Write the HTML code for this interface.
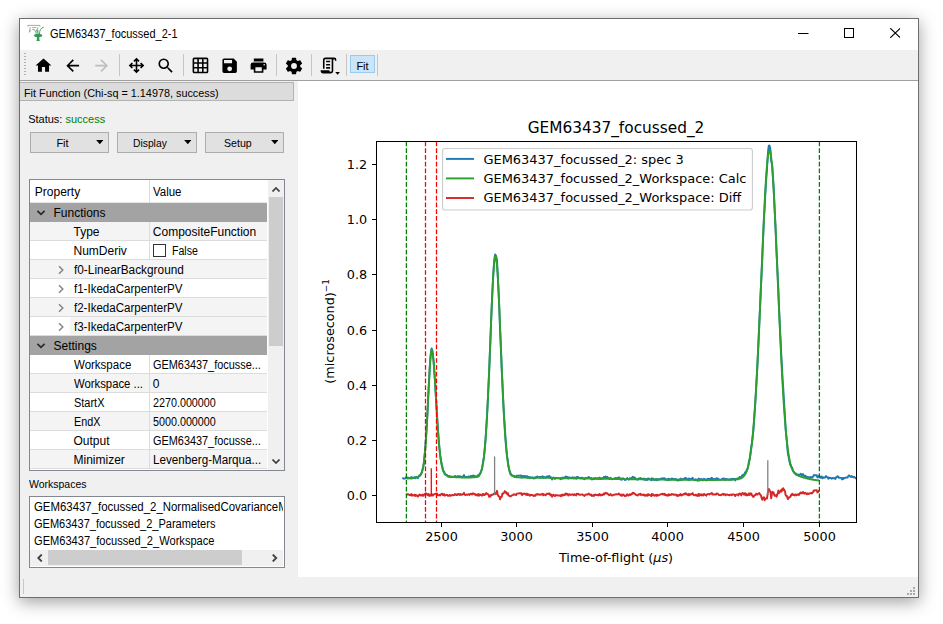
<!DOCTYPE html>
<html><head><meta charset="utf-8"><title>GEM63437_focussed_2-1</title>
<style>
html,body{margin:0;padding:0;background:#fff;}
body{width:943px;height:624px;position:relative;overflow:hidden;font-family:"Liberation Sans",sans-serif;font-size:11px;color:#000;}
div,span,svg{position:absolute;box-sizing:border-box;}
.win{left:19px;top:18px;width:900px;height:580px;background:#f0f0f0;border:1px solid #6e6e6e;box-shadow:0 4px 16px rgba(0,0,0,.38);}
.title{left:20px;top:19px;width:898px;height:31px;background:#fff;}
.title .tx{left:29.8px;top:7.5px;font-size:12px;line-height:14px;white-space:nowrap;letter-spacing:0px;}
.tool{left:20px;top:50px;width:898px;height:30px;background:#f0f0f0;}
.toolline{left:20px;top:80px;width:898px;height:1px;background:#a0a0a0;}
.ic{overflow:visible;}
.tsep{top:54px;width:1px;height:22px;background:#c6c6c6;}
.handle{left:24px;top:53px;width:2px;height:23px;background-image:linear-gradient(#b0b0b0 50%,transparent 50%);background-size:2px 3px;}
.fitb{left:350px;top:55px;width:25px;height:18px;background:#cce4f7;border:1px solid #99cbf0;}
.fitb span{left:5.4px;top:3.6px;line-height:13px;font-size:11px;}
.canvas{left:298px;top:81px;width:620px;height:496px;background:#fff;}
.hdr{left:20px;top:82px;width:274px;height:19px;background:#dcdcdc;border:1px solid #b2b2b2;border-left:none;}
.hdr span{left:4.2px;top:3.5px;line-height:13px;white-space:nowrap;}
.lbl{white-space:nowrap;line-height:13px;}
.btn{top:132px;height:21px;background:#e1e1e1;border:1px solid #adadad;}
.btn .lbl{top:3.6px;}
.btn svg{top:6.8px;width:7.6px;height:4.6px;}
.tbl{left:29px;top:179px;width:256px;height:292px;background:#fff;border:1px solid #828790;overflow:hidden;}
.tbl .in{left:0;top:0;width:237px;height:290px;font-size:12px;overflow:hidden;}
.hd{left:0;top:0;width:238px;height:23px;background:#fff;border-bottom:1px solid #e5e5e5;}
.hd .t{top:5px;}
.r{left:0;width:238px;height:19px;border-bottom:1px solid #dcdcdc;background:#fff;}
.r.a{background:#f4f4f4;}
.r.g{background:#a3a3a3;border-bottom:1px solid #a3a3a3;}
.t{top:3px;line-height:14px;white-space:nowrap;}
.vd{left:118.5px;top:0;width:1px;height:19px;background:#dcdcdc;}
.cb{left:123px;top:3px;width:13px;height:13px;border:1px solid #333;background:#fff;}
.chv{left:5.5px;top:4.5px;width:10px;height:10px;}
.chr{left:25.5px;top:4.5px;width:10px;height:10px;}
.vsb{left:238px;top:0;width:16px;height:290px;background:#f0f0f0;}
.vsb .th{left:1px;top:17px;width:14px;height:149px;background:#cdcdcd;}
.lst{left:29px;top:496px;width:256px;height:72px;background:#fff;border:1px solid #828790;overflow:hidden;font-size:12px;}
.lst .t{left:4px;}
.hsb{left:0;top:53px;width:253px;height:16px;background:#f0f0f0;}
.clip{left:0;top:0;width:253px;height:53px;overflow:hidden;}
.hsb .th{left:18px;top:0;width:194px;height:15px;background:#cdcdcd;}
.plot{left:0;top:0;}
</style></head><body>
<div class="win"></div>
<div class="title">
<svg style="left:7px;top:5px;width:18px;height:18px" viewBox="0 0 18 18">
<g fill="none" stroke="#8e8e8e" stroke-width=".75"><path d="M.9 2.700V1.400H13V2.700"/><path d="M5.200 3.600H9.200"/><path d="M3.200 3.300L2.400 8.300L3.600 6.200"/><path d="M10.800 3.200L10.300 8.600M9.300 5.200L10 8.600"/></g>
<g fill="none" stroke="#2f9a52" stroke-linecap="round"><path d="M5.800 5.300C8 5.600 8.900 7 9.200 9.600" stroke-width=".75"/><path d="M16.400 3.200C13.900 4 12.700 6 12.400 9.600" stroke-width=".9"/><path d="M11 6.500V9.800" stroke-width=".7"/></g>
<ellipse cx="11.100" cy="11.500" rx="4.100" ry="1.650" fill="#2f9a52"/>
<path d="M9.900 12.500H12.300L12.300 15.200L12.900 16.900H9.400L9.900 15.200Z" fill="#2f9a52"/>
</svg>
<span class="tx" style=";transform:scaleX(0.9144);transform-origin:0 0">GEM63437_focussed_2-1</span>
<svg style="left:778.3px;top:14px;width:10.5px;height:1px" viewBox="0 0 11 1" preserveAspectRatio="none"><rect width="11" height="1" fill="#000"/></svg>
<svg style="left:824px;top:9px;width:10px;height:10px" viewBox="0 0 10 10"><rect x=".5" y=".5" width="9" height="9" fill="none" stroke="#000" stroke-width="1"/></svg>
<svg style="left:869.6px;top:9px;width:10.6px;height:10px" viewBox="0 0 10.6 10"><path d="M.3.200L10.300 9.800M10.300.200L.3 9.800" stroke="#000" stroke-width="1.05" fill="none"/></svg>
</div>
<div class="tool"></div><div class="toolline"></div>
<div class="handle"></div>
<svg class="ic" style="left:34.05px;top:56.30px;width:19.0px;height:19.0px" viewBox="0 0 24 24"><path fill="#000" d="M10,20V14H14V20H19V12H22L12,3L2,12H5V20H10Z"/></svg>
<svg class="ic" style="left:62.99px;top:56.15px;width:19.3px;height:19.3px" viewBox="0 0 24 24"><path fill="#000" d="M20,11V13H8L13.5,18.5L12.08,19.92L4.16,12L12.08,4.08L13.5,5.5L8,11H20Z"/></svg>
<svg class="ic" style="left:91.61px;top:56.15px;width:19.3px;height:19.3px" viewBox="0 0 24 24"><path fill="#bdbdbd" d="M4,11V13H16L10.5,18.5L11.92,19.92L19.84,12L11.92,4.08L10.5,5.5L16,11H4Z"/></svg>
<svg class="ic" style="left:127.05px;top:56.20px;width:19.0px;height:19.0px" viewBox="0 0 24 24"><path fill="#000" d="M13,11H18L16.5,9.5L17.92,8.08L21.84,12L17.92,15.92L16.5,14.5L18,13H13V18L14.5,16.5L15.92,17.92L12,21.84L8.08,17.92L9.5,16.5L11,18V13H6L7.5,14.5L6.08,15.92L2.16,12L6.08,8.08L7.5,9.5L6,11H11V6L9.5,7.5L8.08,6.08L12,2.16L15.92,6.08L14.5,7.5L13,6V11Z"/></svg>
<svg class="ic" style="left:155.55px;top:55.95px;width:19.5px;height:19.5px" viewBox="0 0 24 24"><path fill="#000" d="M9.5,3A6.5,6.5 0 0,1 16,9.5C16,11.11 15.41,12.59 14.44,13.73L14.71,14H15.5L20.5,19L19,20.5L14,15.5V14.71L13.73,14.44C12.59,15.41 11.11,16 9.5,16A6.5,6.5 0 0,1 3,9.5A6.5,6.5 0 0,1 9.5,3M9.5,5C7,5 5,7 5,9.5C5,12 7,14 9.5,14C12,14 14,12 14,9.5C14,7 12,5 9.5,5Z"/></svg>
<svg class="ic" style="left:191.05px;top:56.35px;width:18.9px;height:18.9px" viewBox="0 0 24 24"><path fill="#000" d="M10,4V8H14V4H10M16,4V8H20V4H16M16,10V14H20V10H16M16,16V20H20V16H16M14,20V16H10V20H14M8,20V16H4V20H8M8,14V10H4V14H8M8,8V4H4V8H8M10,14H14V10H10V14M4,2H20A2,2 0 0,1 22,4V20A2,2 0 0,1 20,22H4C2.92,22 2,21.1 2,20V4A2,2 0 0,1 4,2Z"/></svg>
<svg class="ic" style="left:219.90px;top:56.15px;width:19.3px;height:19.3px" viewBox="0 0 24 24"><path fill="#000" d="M15,9H5V5H15M12,19A3,3 0 0,1 9,16A3,3 0 0,1 12,13A3,3 0 0,1 15,16A3,3 0 0,1 12,19M17,3H5C3.89,3 3,3.9 3,5V19A2,2 0 0,0 5,21H19A2,2 0 0,0 21,19V7L17,3Z"/></svg>
<svg class="ic" style="left:248.90px;top:56.15px;width:19.2px;height:19.2px" viewBox="0 0 24 24"><path fill="#000" d="M18,3H6V7H18M19,12A1,1 0 0,1 18,11A1,1 0 0,1 19,10A1,1 0 0,1 20,11A1,1 0 0,1 19,12M16,19H8V14H16M19,8H5A3,3 0 0,0 2,11V17H6V21H18V17H22V11A3,3 0 0,0 19,8Z"/></svg>
<svg class="ic" style="left:283.60px;top:55.75px;width:20.0px;height:20.0px" viewBox="0 0 24 24"><path fill="#000" d="M12,15.5A3.5,3.5 0 0,1 8.5,12A3.5,3.5 0 0,1 12,8.5A3.5,3.5 0 0,1 15.5,12A3.5,3.5 0 0,1 12,15.5M19.43,12.97C19.47,12.65 19.5,12.33 19.5,12C19.5,11.67 19.47,11.34 19.43,11L21.54,9.37C21.73,9.22 21.78,8.95 21.66,8.73L19.66,5.27C19.54,5.05 19.27,4.96 19.05,5.05L16.56,6.05C16.04,5.66 15.5,5.32 14.87,5.07L14.5,2.42C14.46,2.18 14.25,2 14,2H10C9.75,2 9.54,2.18 9.5,2.42L9.13,5.07C8.5,5.32 7.96,5.66 7.44,6.05L4.95,5.05C4.73,4.96 4.46,5.05 4.34,5.27L2.34,8.73C2.21,8.95 2.27,9.22 2.46,9.37L4.57,11C4.53,11.34 4.5,11.67 4.5,12C4.5,12.33 4.53,12.65 4.57,12.97L2.46,14.63C2.27,14.78 2.21,15.05 2.34,15.27L4.34,18.73C4.46,18.95 4.73,19.03 4.95,18.95L7.44,17.94C7.96,18.34 8.5,18.68 9.13,18.93L9.5,21.58C9.54,21.82 9.75,22 10,22H14C14.25,22 14.46,21.82 14.5,21.58L14.87,18.93C15.5,18.67 16.04,18.34 16.56,17.94L19.05,18.95C19.27,19.03 19.54,18.95 19.66,18.73L21.66,15.27C21.78,15.05 21.73,14.78 21.54,14.63L19.43,12.97Z"/></svg>
<svg class="ic" style="left:319.10px;top:56.30px;width:19.0px;height:19.0px" viewBox="0 0 24 24"><path fill="#000" d="M15,20A1,1 0 0,0 16,19V4H8A1,1 0 0,0 7,5V16H5V5A3,3 0 0,1 8,2H19A3,3 0 0,1 22,5V6H20V5A1,1 0 0,0 19,4A1,1 0 0,0 18,5V9L18,19A3,3 0 0,1 15,22H5A3,3 0 0,1 2,19V18H13A2,2 0 0,0 15,20M9,6H14V8H9V6M9,10H14V12H9V10M9,14H14V16H9V14Z"/></svg>

<svg class="ic" style="left:335px;top:72px;width:5.2px;height:2.8px" viewBox="0 0 5 3"><path d="M0 0H5L2.5 3Z" fill="#000"/></svg>
<div class="tsep" style="left:119.0px"></div><div class="tsep" style="left:183.0px"></div><div class="tsep" style="left:276.0px"></div><div class="tsep" style="left:311.0px"></div><div class="tsep" style="left:346.0px"></div><div class="tsep" style="left:377.0px"></div>
<div class="fitb"><span>Fit</span></div>
<div class="canvas"></div>
<div class="hdr"><span id="hdrt" style=";transform:scaleX(0.9844);transform-origin:0 0">Fit Function (Chi-sq = 1.14978, success)</span></div>
<span class="lbl" id="status" style="left:28.2px;top:112.5px">Status: <span style="position:static;color:#008000">success</span></span>
<div class="btn" style="left:30px;width:79px"><span class="lbl" style="left:25.4px">Fit</span><svg style="left:64.6px" viewBox="0 0 8 5"><path d="M0 0H8L4 4.600Z"/></svg></div>
<div class="btn" style="left:117px;width:80px"><span class="lbl" style="left:15.4px;transform:scaleX(0.9369);transform-origin:0 0">Display</span><svg style="left:65.7px" viewBox="0 0 8 5"><path d="M0 0H8L4 4.600Z"/></svg></div>
<div class="btn" style="left:205px;width:79px"><span class="lbl" style="left:17.5px;transform:scaleX(0.9635);transform-origin:0 0">Setup</span><svg style="left:64.5px" viewBox="0 0 8 5"><path d="M0 0H8L4 4.600Z"/></svg></div>
<div class="tbl"><div class="in">
<div class="hd"><span class="t" style="left:4.8px">Property</span><span class="vd" style="height:23px"></span><span class="t" style="left:122.8px;transform:scaleX(0.9560);transform-origin:0 0">Value</span></div>
<div class="r g" style="top:23px"><svg class="chv" viewBox="0 0 10 10"><path d="M1.4 2.800L5 6.400L8.600 2.800" fill="none" stroke="#2a2a2a" stroke-width="1.7"/></svg><span class="t" style="left:23.5px">Functions</span></div>
<div class="r a" style="top:42px"><span class="t" style="left:43.5px">Type</span><span class="vd"></span><span class="t" style="left:122.8px">CompositeFunction</span></div>
<div class="r" style="top:61px"><span class="t" style="left:43.5px">NumDeriv</span><span class="vd"></span><span class="cb"></span><span class="t" style="left:141.5px;transform:scaleX(0.8826);transform-origin:0 0">False</span></div>
<div class="r a" style="top:80px"><svg class="chr" viewBox="0 0 10 10"><path d="M3 1.200L6.800 5L3 8.800" fill="none" stroke="#858585" stroke-width="1.5"/></svg><span class="t" style="left:43.5px;transform:scaleX(0.9865);transform-origin:0 0">f0-LinearBackground</span></div>
<div class="r" style="top:99px"><svg class="chr" viewBox="0 0 10 10"><path d="M3 1.200L6.800 5L3 8.800" fill="none" stroke="#858585" stroke-width="1.5"/></svg><span class="t" style="left:43.5px;transform:scaleX(0.9616);transform-origin:0 0">f1-IkedaCarpenterPV</span></div>
<div class="r a" style="top:118px"><svg class="chr" viewBox="0 0 10 10"><path d="M3 1.200L6.800 5L3 8.800" fill="none" stroke="#858585" stroke-width="1.5"/></svg><span class="t" style="left:43.5px;transform:scaleX(0.9616);transform-origin:0 0">f2-IkedaCarpenterPV</span></div>
<div class="r a" style="top:137px"><span style="left:0;top:0;width:40px;height:18px;background:#fff"></span><svg class="chr" viewBox="0 0 10 10"><path d="M3 1.200L6.800 5L3 8.800" fill="none" stroke="#858585" stroke-width="1.5"/></svg><span class="t" style="left:43.5px;transform:scaleX(0.9616);transform-origin:0 0">f3-IkedaCarpenterPV</span></div>
<div class="r g" style="top:156px"><svg class="chv" viewBox="0 0 10 10"><path d="M1.4 2.800L5 6.400L8.600 2.800" fill="none" stroke="#2a2a2a" stroke-width="1.7"/></svg><span class="t" style="left:23.5px">Settings</span></div>
<div class="r" style="top:175px"><span class="t" style="left:43.5px;transform:scaleX(0.9580);transform-origin:0 0">Workspace</span><span class="vd"></span><span class="t" style="left:122.8px;transform:scaleX(0.9079);transform-origin:0 0">GEM63437_focusse...</span></div>
<div class="r a" style="top:194px"><span class="t" style="left:43.5px;transform:scaleX(0.9434);transform-origin:0 0">Workspace ...</span><span class="vd"></span><span class="t" style="left:122.8px">0</span></div>
<div class="r" style="top:213px"><span class="t" style="left:43.5px;transform:scaleX(0.9143);transform-origin:0 0">StartX</span><span class="vd"></span><span class="t" style="left:122.8px;transform:scaleX(0.8961);transform-origin:0 0">2270.000000</span></div>
<div class="r a" style="top:232px"><span class="t" style="left:43.5px;transform:scaleX(0.8992);transform-origin:0 0">EndX</span><span class="vd"></span><span class="t" style="left:122.8px;transform:scaleX(0.8961);transform-origin:0 0">5000.000000</span></div>
<div class="r" style="top:251px"><span class="t" style="left:43.5px">Output</span><span class="vd"></span><span class="t" style="left:122.8px;transform:scaleX(0.9079);transform-origin:0 0">GEM63437_focusse...</span></div>
<div class="r a" style="top:270px"><span class="t" style="left:43.5px">Minimizer</span><span class="vd"></span><span class="t" style="left:122.8px;transform:scaleX(0.9721);transform-origin:0 0">Levenberg-Marqua...</span></div>

</div>
<div class="vsb"><div class="th"></div>
<svg style="left:3.7px;top:6.8px;width:8px;height:5px" viewBox="0 0 8 5"><path d="M.5 4.500L4 1l3.500 3.500" fill="none" stroke="#404040" stroke-width="1.7"/></svg>
<svg style="left:3.7px;top:279.3px;width:8px;height:5px" viewBox="0 0 8 5"><path d="M.5.500L4 4l3.500-3.500" fill="none" stroke="#404040" stroke-width="1.7"/></svg>
</div></div>
<span class="lbl" style="left:28.8px;top:478px;transform:scaleX(0.9531);transform-origin:0 0">Workspaces</span>
<div class="lst"><div class="clip">
<span class="t" style="top:3.2px;transform:scaleX(0.9507);transform-origin:0 0">GEM63437_focussed_2_NormalisedCovarianceMatrix</span>
<span class="t" style="top:20.2px;transform:scaleX(0.9187);transform-origin:0 0">GEM63437_focussed_2_Parameters</span>
<span class="t" style="top:37.2px;transform:scaleX(0.9245);transform-origin:0 0">GEM63437_focussed_2_Workspace</span></div>
<div class="hsb"><div class="th"></div>
<svg style="left:7px;top:3.7px;width:5.5px;height:8px" viewBox="0 0 5 8"><path d="M4.500.5L1 4l3.500 3.500" fill="none" stroke="#404040" stroke-width="1.8"/></svg>
<svg style="left:242.3px;top:3.7px;width:5.5px;height:8px" viewBox="0 0 5 8"><path d="M.5.500L4 4L.5 7.500" fill="none" stroke="#404040" stroke-width="1.8"/></svg>
</div></div>
<div style="left:23px;top:579px;width:1px;height:15px;background:#c8c8c8"></div>
<svg style="left:907px;top:587px;width:8px;height:8px" viewBox="0 0 8 8"><g fill="#a9a9a9"><rect x="6" y="0" width="2" height="2"/><rect x="3" y="3" width="2" height="2"/><rect x="6" y="3" width="2" height="2"/><rect x="0" y="6" width="2" height="2"/><rect x="3" y="6" width="2" height="2"/><rect x="6" y="6" width="2" height="2"/></g></svg>
<svg class="plot" width="943" height="624" viewBox="0 0 943 624">
<defs><clipPath id="ax"><rect x="376.5" y="141.5" width="480.0" height="381.0"/></clipPath></defs>
<g font-family="'DejaVu Sans','Liberation Sans',sans-serif" font-size="12.8" fill="#000">
<g clip-path="url(#ax)" fill="none" stroke-linejoin="round">
<path d="M402.2 478.4 L402.8 478.3 L403.4 478.4 L404.0 478.7 L404.6 478.4 L405.2 478.5 L405.8 478.2 L406.4 477.0 L407.0 477.9 L407.6 477.8 L408.2 477.6 L408.8 477.8 L409.4 478.2 L410.0 478.4 L410.6 477.8 L411.2 477.0 L411.8 478.5 L412.4 477.5 L413.0 478.1 L413.6 477.7 L414.2 477.9 L414.8 477.3 L415.4 478.2 L416.0 477.1 L416.6 477.4 L417.2 477.5 L417.8 478.2 L418.4 477.0 L419.0 476.0 L419.6 475.2 L420.2 475.6 L420.8 474.2 L421.4 473.4 L422.0 472.0 L422.6 469.0 L423.2 467.4 L423.8 463.4 L424.4 457.2 L425.0 451.0 L425.6 442.9 L426.2 434.1 L426.8 424.6 L427.4 414.2 L428.0 401.2 L428.6 388.6 L429.2 378.5 L429.8 366.9 L430.4 358.6 L431.0 352.7 L431.6 348.4 L432.2 349.8 L432.8 354.3 L433.4 359.0 L434.0 366.1 L434.6 375.0 L435.2 384.1 L435.8 394.3 L436.4 404.3 L437.0 414.1 L437.6 425.1 L438.2 433.6 L438.8 441.4 L439.4 447.6 L440.0 454.0 L440.6 458.3 L441.2 461.5 L441.8 464.3 L442.4 466.7 L443.0 470.1 L443.6 471.2 L444.2 471.8 L444.8 474.3 L445.4 474.6 L446.0 474.9 L446.6 474.8 L447.2 475.3 L447.8 476.5 L448.4 476.8 L449.0 476.9 L449.6 476.1 L450.2 477.1 L450.8 477.2 L451.4 477.0 L452.0 476.8 L452.6 476.6 L453.2 477.1 L453.8 476.8 L454.4 476.9 L455.0 475.9 L455.6 476.4 L456.2 477.0 L456.8 476.6 L457.4 477.1 L458.0 476.0 L458.6 476.8 L459.2 476.3 L459.8 477.1 L460.4 476.2 L461.0 477.1 L461.6 477.2 L462.2 476.6 L462.8 476.8 L463.4 476.4 L464.0 475.1 L464.6 476.7 L465.2 477.3 L465.8 477.1 L466.4 476.9 L467.0 477.2 L467.6 477.0 L468.2 476.7 L468.8 476.5 L469.4 477.2 L470.0 476.5 L470.6 476.1 L471.2 476.5 L471.8 476.0 L472.4 476.6 L473.0 475.4 L473.6 475.8 L474.2 475.9 L474.8 476.5 L475.4 476.2 L476.0 477.1 L476.6 476.5 L477.2 475.9 L477.8 476.7 L478.4 474.8 L479.0 475.9 L479.6 474.0 L480.2 473.6 L480.8 471.7 L481.4 470.4 L482.0 469.0 L482.6 464.9 L483.2 461.0 L483.8 457.9 L484.4 452.7 L485.0 445.7 L485.6 438.3 L486.2 428.5 L486.8 419.3 L487.4 408.0 L488.0 396.3 L488.6 383.3 L489.2 371.2 L489.8 355.1 L490.4 340.9 L491.0 324.0 L491.6 309.4 L492.2 295.9 L492.8 283.3 L493.4 272.2 L494.0 263.5 L494.6 257.5 L495.2 254.4 L495.8 255.4 L496.4 257.0 L497.0 260.6 L497.6 272.1 L498.2 284.3 L498.8 297.0 L499.4 311.2 L500.0 328.4 L500.6 342.1 L501.2 356.1 L501.8 371.1 L502.4 382.1 L503.0 395.8 L503.6 407.5 L504.2 418.0 L504.8 426.5 L505.4 436.3 L506.0 443.5 L506.6 451.1 L507.2 456.9 L507.8 460.2 L508.4 466.0 L509.0 468.8 L509.6 471.6 L510.2 473.5 L510.8 474.8 L511.4 474.9 L512.0 475.7 L512.6 475.9 L513.2 476.1 L513.8 475.7 L514.4 476.3 L515.0 476.3 L515.6 476.8 L516.2 477.1 L516.8 475.8 L517.4 475.7 L518.0 475.8 L518.6 475.6 L519.2 475.6 L519.8 475.6 L520.4 475.5 L521.0 476.1 L521.6 475.6 L522.2 477.5 L522.8 476.2 L523.4 476.4 L524.0 476.1 L524.6 475.9 L525.2 476.3 L525.8 477.2 L526.4 477.3 L527.0 476.0 L527.6 477.5 L528.2 477.0 L528.8 476.8 L529.4 477.9 L530.0 478.3 L530.6 477.3 L531.2 477.5 L531.8 477.4 L532.4 477.5 L533.0 478.1 L533.6 478.6 L534.2 477.8 L534.8 477.9 L535.4 478.3 L536.0 476.9 L536.6 477.0 L537.2 476.5 L537.8 477.1 L538.4 476.9 L539.0 477.3 L539.6 477.2 L540.2 476.9 L540.8 477.4 L541.4 477.0 L542.0 476.9 L542.6 476.3 L543.2 477.9 L543.8 476.9 L544.4 477.3 L545.0 477.2 L545.6 477.9 L546.2 477.2 L546.8 476.5 L547.4 476.7 L548.0 476.3 L548.6 476.7 L549.2 476.1 L549.8 476.6 L550.4 478.0 L551.0 477.3 L551.6 478.3 L552.2 479.5 L552.8 478.0 L553.4 477.4 L554.0 478.1 L554.6 478.8 L555.2 478.9 L555.8 477.8 L556.4 478.0 L557.0 478.3 L557.6 478.2 L558.2 478.4 L558.8 478.3 L559.4 478.5 L560.0 478.3 L560.6 479.2 L561.2 478.1 L561.8 478.6 L562.4 477.5 L563.0 478.4 L563.6 477.7 L564.2 477.8 L564.8 478.0 L565.4 476.6 L566.0 476.5 L566.6 477.6 L567.2 476.9 L567.8 477.1 L568.4 478.6 L569.0 477.5 L569.6 477.4 L570.2 477.7 L570.8 478.1 L571.4 477.7 L572.0 477.7 L572.6 477.3 L573.2 477.8 L573.8 478.5 L574.4 477.4 L575.0 477.9 L575.6 477.8 L576.2 478.7 L576.8 477.0 L577.4 477.3 L578.0 477.0 L578.6 477.3 L579.2 478.1 L579.8 478.1 L580.4 478.0 L581.0 477.9 L581.6 477.9 L582.2 477.6 L582.8 478.1 L583.4 478.7 L584.0 478.9 L584.6 479.2 L585.2 478.0 L585.8 478.0 L586.4 477.8 L587.0 478.1 L587.6 477.9 L588.2 477.4 L588.8 476.9 L589.4 477.8 L590.0 478.1 L590.6 478.6 L591.2 478.0 L591.8 479.4 L592.4 479.1 L593.0 479.3 L593.6 478.3 L594.2 479.1 L594.8 478.1 L595.4 478.0 L596.0 478.3 L596.6 478.6 L597.2 478.2 L597.8 478.4 L598.4 478.9 L599.0 478.2 L599.6 477.5 L600.2 479.0 L600.8 478.5 L601.4 478.8 L602.0 478.1 L602.6 478.6 L603.2 478.2 L603.8 477.1 L604.4 478.0 L605.0 476.8 L605.6 476.5 L606.2 477.0 L606.8 477.2 L607.4 477.0 L608.0 477.9 L608.6 478.2 L609.2 478.9 L609.8 478.4 L610.4 477.8 L611.0 478.3 L611.6 479.2 L612.2 479.2 L612.8 479.0 L613.4 478.6 L614.0 478.7 L614.6 478.3 L615.2 478.0 L615.8 478.3 L616.4 478.1 L617.0 478.0 L617.6 478.2 L618.2 478.1 L618.8 477.3 L619.4 478.0 L620.0 478.4 L620.6 479.4 L621.2 478.4 L621.8 479.7 L622.4 479.4 L623.0 478.3 L623.6 478.5 L624.2 479.2 L624.8 480.0 L625.4 479.6 L626.0 479.8 L626.6 478.8 L627.2 478.1 L627.8 479.2 L628.4 479.5 L629.0 479.3 L629.6 478.3 L630.2 478.4 L630.8 478.9 L631.4 477.9 L632.0 478.1 L632.6 476.8 L633.2 477.1 L633.8 477.1 L634.4 478.0 L635.0 477.8 L635.6 478.6 L636.2 479.1 L636.8 479.1 L637.4 479.7 L638.0 479.4 L638.6 478.4 L639.2 478.7 L639.8 478.6 L640.4 477.9 L641.0 479.1 L641.6 478.7 L642.2 478.8 L642.8 478.9 L643.4 479.4 L644.0 478.6 L644.6 479.1 L645.2 480.1 L645.8 480.0 L646.4 479.0 L647.0 478.8 L647.6 479.9 L648.2 478.4 L648.8 479.1 L649.4 478.8 L650.0 479.3 L650.6 479.7 L651.2 480.2 L651.8 478.3 L652.4 479.7 L653.0 478.6 L653.6 479.5 L654.2 479.4 L654.8 480.0 L655.4 479.6 L656.0 479.0 L656.6 480.2 L657.2 479.0 L657.8 479.3 L658.4 479.9 L659.0 479.5 L659.6 479.2 L660.2 478.9 L660.8 478.8 L661.4 478.6 L662.0 478.2 L662.6 478.7 L663.2 479.0 L663.8 478.2 L664.4 478.1 L665.0 479.5 L665.6 479.0 L666.2 479.6 L666.8 480.1 L667.4 479.3 L668.0 480.1 L668.6 478.7 L669.2 479.8 L669.8 479.1 L670.4 479.4 L671.0 479.5 L671.6 478.6 L672.2 479.0 L672.8 478.7 L673.4 478.9 L674.0 479.4 L674.6 479.2 L675.2 479.1 L675.8 479.0 L676.4 480.1 L677.0 479.5 L677.6 480.6 L678.2 479.7 L678.8 480.2 L679.4 480.2 L680.0 479.2 L680.6 478.5 L681.2 480.1 L681.8 479.9 L682.4 479.3 L683.0 479.4 L683.6 478.7 L684.2 479.0 L684.8 478.7 L685.4 477.8 L686.0 478.8 L686.6 478.4 L687.2 479.2 L687.8 479.6 L688.4 480.0 L689.0 478.4 L689.6 479.8 L690.2 479.0 L690.8 479.0 L691.4 479.0 L692.0 478.8 L692.6 477.8 L693.2 479.2 L693.8 479.7 L694.4 479.8 L695.0 480.2 L695.6 479.3 L696.2 479.4 L696.8 480.3 L697.4 480.7 L698.0 479.9 L698.6 478.6 L699.2 480.7 L699.8 479.1 L700.4 479.9 L701.0 478.9 L701.6 480.0 L702.2 479.3 L702.8 480.4 L703.4 480.2 L704.0 478.8 L704.6 479.0 L705.2 479.8 L705.8 479.8 L706.4 480.5 L707.0 479.2 L707.6 478.9 L708.2 478.8 L708.8 478.9 L709.4 479.3 L710.0 478.7 L710.6 478.6 L711.2 478.2 L711.8 477.7 L712.4 479.0 L713.0 479.4 L713.6 479.0 L714.2 479.3 L714.8 479.2 L715.4 479.0 L716.0 479.4 L716.6 478.2 L717.2 478.4 L717.8 478.6 L718.4 479.1 L719.0 479.9 L719.6 479.8 L720.2 479.7 L720.8 479.9 L721.4 479.5 L722.0 479.0 L722.6 479.3 L723.2 478.4 L723.8 479.4 L724.4 478.8 L725.0 478.8 L725.6 479.9 L726.2 479.1 L726.8 479.0 L727.4 479.4 L728.0 479.4 L728.6 479.6 L729.2 479.8 L729.8 479.2 L730.4 479.4 L731.0 479.1 L731.6 479.8 L732.2 478.9 L732.8 478.8 L733.4 478.9 L734.0 479.1 L734.6 479.0 L735.2 480.4 L735.8 478.9 L736.4 478.8 L737.0 478.6 L737.6 478.5 L738.2 479.3 L738.8 478.2 L739.4 477.1 L740.0 477.0 L740.6 477.2 L741.2 478.3 L741.8 476.7 L742.4 475.1 L743.0 474.9 L743.6 474.8 L744.2 475.1 L744.8 472.9 L745.4 471.9 L746.0 472.7 L746.6 470.1 L747.2 469.7 L747.8 467.8 L748.4 465.1 L749.0 460.8 L749.6 459.4 L750.2 455.5 L750.8 450.3 L751.4 446.2 L752.0 442.9 L752.6 437.6 L753.2 432.2 L753.8 424.6 L754.4 415.5 L755.0 407.0 L755.6 397.4 L756.2 386.0 L756.8 376.1 L757.4 364.8 L758.0 352.0 L758.6 339.0 L759.2 325.0 L759.8 312.4 L760.4 299.1 L761.0 285.7 L761.6 273.7 L762.2 261.3 L762.8 245.3 L763.4 232.0 L764.0 218.2 L764.6 209.0 L765.2 196.0 L765.8 185.9 L766.4 176.4 L767.0 168.8 L767.6 158.2 L768.2 150.1 L768.8 145.6 L769.4 145.5 L770.0 147.2 L770.6 151.1 L771.2 160.9 L771.8 162.7 L772.4 167.1 L773.0 177.1 L773.6 186.3 L774.2 199.9 L774.8 212.8 L775.4 225.6 L776.0 238.3 L776.6 253.7 L777.2 265.7 L777.8 278.5 L778.4 290.1 L779.0 307.0 L779.6 319.5 L780.2 332.9 L780.8 344.2 L781.4 357.9 L782.0 367.2 L782.6 379.4 L783.2 387.4 L783.8 398.5 L784.4 407.7 L785.0 417.0 L785.6 427.8 L786.2 435.4 L786.8 441.0 L787.4 448.3 L788.0 454.3 L788.6 456.5 L789.2 460.4 L789.8 462.7 L790.4 465.3 L791.0 465.5 L791.6 467.6 L792.2 467.7 L792.8 469.8 L793.4 471.4 L794.0 471.9 L794.6 473.4 L795.2 473.3 L795.8 473.5 L796.4 474.7 L797.0 474.5 L797.6 474.9 L798.2 474.5 L798.8 475.6 L799.4 475.4 L800.0 474.5 L800.6 473.8 L801.2 474.3 L801.8 475.2 L802.4 475.1 L803.0 474.1 L803.6 475.3 L804.2 476.2 L804.8 475.7 L805.4 475.6 L806.0 476.6 L806.6 477.3 L807.2 477.5 L807.8 476.8 L808.4 477.6 L809.0 477.7 L809.6 477.4 L810.2 477.1 L810.8 477.5 L811.4 477.1 L812.0 477.7 L812.6 477.0 L813.2 476.6 L813.8 475.0 L814.4 475.4 L815.0 475.2 L815.6 475.2 L816.2 475.1 L816.8 475.2 L817.4 477.5 L818.0 477.1 L818.6 476.6 L819.2 475.6 L819.8 477.0 L820.4 477.8 L821.0 477.3 L821.6 476.4 L822.2 478.1 L822.8 478.3 L823.4 477.3 L824.0 477.5 L824.6 477.4 L825.2 477.6 L825.8 476.2 L826.4 476.2 L827.0 477.2 L827.6 477.4 L828.2 478.7 L828.8 477.5 L829.4 478.3 L830.0 477.8 L830.6 477.9 L831.2 478.2 L831.8 478.7 L832.4 478.0 L833.0 478.3 L833.6 478.0 L834.2 478.3 L834.8 478.1 L835.4 479.0 L836.0 477.2 L836.6 477.4 L837.2 476.6 L837.8 476.2 L838.4 477.0 L839.0 477.8 L839.6 477.6 L840.2 477.9 L840.8 477.9 L841.4 478.1 L842.0 479.4 L842.6 478.0 L843.2 479.0 L843.8 478.0 L844.4 478.3 L845.0 477.9 L845.6 477.6 L846.2 477.5 L846.8 477.5 L847.4 477.7 L848.0 476.9 L848.6 475.6 L849.2 475.4 L849.8 476.0 L850.4 476.4 L851.0 477.0 L851.6 476.1 L852.2 476.7 L852.8 476.6 L853.4 477.3 L854.0 476.8 L854.6 477.4 L855.2 477.6 L855.8 478.3 L856.4 478.1 L857.0 477.0 L857.6 478.0" stroke="#1f77b4" stroke-width="1.92"/>
<path d="M406.4 478.6 L407.0 478.6 L407.6 478.5 L408.2 478.5 L408.8 478.4 L409.4 478.4 L410.0 478.3 L410.6 478.2 L411.2 478.2 L411.8 478.1 L412.4 478.0 L413.0 477.9 L413.6 477.8 L414.2 477.7 L414.8 477.6 L415.4 477.5 L416.0 477.3 L416.6 477.2 L417.2 477.0 L417.8 476.8 L418.4 476.5 L419.0 476.2 L419.6 475.8 L420.2 475.2 L420.8 474.4 L421.4 473.3 L422.0 471.8 L422.6 469.7 L423.2 466.9 L423.8 463.1 L424.4 458.3 L425.0 452.2 L425.6 444.8 L426.2 435.9 L426.8 425.7 L427.4 414.3 L428.0 402.2 L428.6 389.8 L429.2 377.8 L429.8 367.0 L430.4 358.2 L431.0 352.2 L431.6 349.7 L432.2 350.5 L432.8 353.9 L433.4 359.5 L434.0 366.9 L434.6 375.8 L435.2 385.5 L435.8 395.6 L436.4 405.8 L437.0 415.7 L437.6 425.1 L438.2 433.6 L438.8 441.3 L439.4 448.0 L440.0 453.7 L440.6 458.5 L441.2 462.5 L441.8 465.6 L442.4 468.2 L443.0 470.2 L443.6 471.7 L444.2 472.9 L444.8 473.8 L445.4 474.4 L446.0 475.0 L446.6 475.4 L447.2 475.7 L447.8 475.9 L448.4 476.1 L449.0 476.3 L449.6 476.4 L450.2 476.5 L450.8 476.6 L451.4 476.7 L452.0 476.8 L452.6 476.9 L453.2 476.9 L453.8 477.0 L454.4 477.1 L455.0 477.1 L455.6 477.2 L456.2 477.2 L456.8 477.3 L457.4 477.3 L458.0 477.3 L458.6 477.4 L459.2 477.4 L459.8 477.4 L460.4 477.4 L461.0 477.4 L461.6 477.5 L462.2 477.5 L462.8 477.5 L463.4 477.5 L464.0 477.5 L464.6 477.5 L465.2 477.5 L465.8 477.5 L466.4 477.5 L467.0 477.5 L467.6 477.5 L468.2 477.5 L468.8 477.5 L469.4 477.5 L470.0 477.5 L470.6 477.5 L471.2 477.5 L471.8 477.4 L472.4 477.4 L473.0 477.4 L473.6 477.3 L474.2 477.3 L474.8 477.2 L475.4 477.1 L476.0 477.0 L476.6 476.9 L477.2 476.6 L477.8 476.4 L478.4 476.0 L479.0 475.4 L479.6 474.7 L480.2 473.7 L480.8 472.4 L481.4 470.7 L482.0 468.6 L482.6 465.8 L483.2 462.4 L483.8 458.1 L484.4 452.9 L485.0 446.6 L485.6 439.2 L486.2 430.6 L486.8 420.7 L487.4 409.5 L488.0 397.2 L488.6 383.8 L489.2 369.6 L489.8 354.7 L490.4 339.5 L491.0 324.4 L491.6 309.7 L492.2 296.1 L492.8 283.8 L493.4 273.3 L494.0 265.1 L494.6 259.4 L495.2 256.5 L495.8 256.5 L496.4 259.4 L497.0 265.1 L497.6 273.3 L498.2 283.8 L498.8 296.1 L499.4 309.7 L500.0 324.4 L500.6 339.5 L501.2 354.7 L501.8 369.5 L502.4 383.8 L503.0 397.2 L503.6 409.5 L504.2 420.7 L504.8 430.5 L505.4 439.2 L506.0 446.6 L506.6 452.9 L507.2 458.1 L507.8 462.3 L508.4 465.8 L509.0 468.6 L509.6 470.7 L510.2 472.4 L510.8 473.7 L511.4 474.7 L512.0 475.4 L512.6 475.9 L513.2 476.3 L513.8 476.6 L514.4 476.8 L515.0 477.0 L515.6 477.1 L516.2 477.2 L516.8 477.3 L517.4 477.3 L518.0 477.4 L518.6 477.4 L519.2 477.4 L519.8 477.5 L520.4 477.5 L521.0 477.5 L521.6 477.5 L522.2 477.6 L522.8 477.6 L523.4 477.6 L524.0 477.6 L524.6 477.6 L525.2 477.6 L525.8 477.6 L526.4 477.6 L527.0 477.7 L527.6 477.7 L528.2 477.7 L528.8 477.7 L529.4 477.7 L530.0 477.7 L530.6 477.7 L531.2 477.7 L531.8 477.7 L532.4 477.7 L533.0 477.7 L533.6 477.7 L534.2 477.7 L534.8 477.7 L535.4 477.7 L536.0 477.7 L536.6 477.7 L537.2 477.7 L537.8 477.7 L538.4 477.7 L539.0 477.7 L539.6 477.7 L540.2 477.7 L540.8 477.8 L541.4 477.8 L542.0 477.8 L542.6 477.8 L543.2 477.8 L543.8 477.8 L544.4 477.8 L545.0 477.8 L545.6 477.9 L546.2 477.9 L546.8 477.9 L547.4 477.9 L548.0 477.9 L548.6 477.9 L549.2 477.9 L549.8 477.9 L550.4 478.0 L551.0 478.0 L551.6 478.0 L552.2 478.0 L552.8 478.0 L553.4 478.0 L554.0 478.0 L554.6 478.0 L555.2 478.0 L555.8 478.1 L556.4 478.1 L557.0 478.1 L557.6 478.1 L558.2 478.1 L558.8 478.1 L559.4 478.1 L560.0 478.1 L560.6 478.1 L561.2 478.1 L561.8 478.2 L562.4 478.2 L563.0 478.2 L563.6 478.2 L564.2 478.2 L564.8 478.2 L565.4 478.2 L566.0 478.2 L566.6 478.2 L567.2 478.2 L567.8 478.3 L568.4 478.3 L569.0 478.3 L569.6 478.3 L570.2 478.3 L570.8 478.3 L571.4 478.3 L572.0 478.3 L572.6 478.3 L573.2 478.3 L573.8 478.4 L574.4 478.4 L575.0 478.4 L575.6 478.4 L576.2 478.4 L576.8 478.4 L577.4 478.4 L578.0 478.4 L578.6 478.4 L579.2 478.4 L579.8 478.4 L580.4 478.5 L581.0 478.5 L581.6 478.5 L582.2 478.5 L582.8 478.5 L583.4 478.5 L584.0 478.5 L584.6 478.5 L585.2 478.5 L585.8 478.5 L586.4 478.5 L587.0 478.6 L587.6 478.6 L588.2 478.6 L588.8 478.6 L589.4 478.6 L590.0 478.6 L590.6 478.6 L591.2 478.6 L591.8 478.6 L592.4 478.6 L593.0 478.6 L593.6 478.7 L594.2 478.7 L594.8 478.7 L595.4 478.7 L596.0 478.7 L596.6 478.7 L597.2 478.7 L597.8 478.7 L598.4 478.7 L599.0 478.7 L599.6 478.7 L600.2 478.8 L600.8 478.8 L601.4 478.8 L602.0 478.8 L602.6 478.8 L603.2 478.8 L603.8 478.8 L604.4 478.8 L605.0 478.8 L605.6 478.8 L606.2 478.8 L606.8 478.9 L607.4 478.9 L608.0 478.9 L608.6 478.9 L609.2 478.9 L609.8 478.9 L610.4 478.9 L611.0 478.9 L611.6 478.9 L612.2 478.9 L612.8 478.9 L613.4 478.9 L614.0 479.0 L614.6 479.0 L615.2 479.0 L615.8 479.0 L616.4 479.0 L617.0 479.0 L617.6 479.0 L618.2 479.0 L618.8 479.0 L619.4 479.0 L620.0 479.0 L620.6 479.0 L621.2 479.1 L621.8 479.1 L622.4 479.1 L623.0 479.1 L623.6 479.1 L624.2 479.1 L624.8 479.1 L625.4 479.1 L626.0 479.1 L626.6 479.1 L627.2 479.1 L627.8 479.1 L628.4 479.2 L629.0 479.2 L629.6 479.2 L630.2 479.2 L630.8 479.2 L631.4 479.2 L632.0 479.2 L632.6 479.2 L633.2 479.2 L633.8 479.2 L634.4 479.2 L635.0 479.2 L635.6 479.3 L636.2 479.3 L636.8 479.3 L637.4 479.3 L638.0 479.3 L638.6 479.3 L639.2 479.3 L639.8 479.3 L640.4 479.3 L641.0 479.3 L641.6 479.3 L642.2 479.3 L642.8 479.3 L643.4 479.4 L644.0 479.4 L644.6 479.4 L645.2 479.4 L645.8 479.4 L646.4 479.4 L647.0 479.4 L647.6 479.4 L648.2 479.4 L648.8 479.4 L649.4 479.4 L650.0 479.4 L650.6 479.4 L651.2 479.5 L651.8 479.5 L652.4 479.5 L653.0 479.5 L653.6 479.5 L654.2 479.5 L654.8 479.5 L655.4 479.5 L656.0 479.5 L656.6 479.5 L657.2 479.5 L657.8 479.5 L658.4 479.5 L659.0 479.6 L659.6 479.6 L660.2 479.6 L660.8 479.6 L661.4 479.6 L662.0 479.6 L662.6 479.6 L663.2 479.6 L663.8 479.6 L664.4 479.6 L665.0 479.6 L665.6 479.6 L666.2 479.6 L666.8 479.6 L667.4 479.7 L668.0 479.7 L668.6 479.7 L669.2 479.7 L669.8 479.7 L670.4 479.7 L671.0 479.7 L671.6 479.7 L672.2 479.7 L672.8 479.7 L673.4 479.7 L674.0 479.7 L674.6 479.7 L675.2 479.7 L675.8 479.8 L676.4 479.8 L677.0 479.8 L677.6 479.8 L678.2 479.8 L678.8 479.8 L679.4 479.8 L680.0 479.8 L680.6 479.8 L681.2 479.8 L681.8 479.8 L682.4 479.8 L683.0 479.8 L683.6 479.8 L684.2 479.8 L684.8 479.8 L685.4 479.8 L686.0 479.9 L686.6 479.9 L687.2 479.9 L687.8 479.9 L688.4 479.9 L689.0 479.9 L689.6 479.9 L690.2 479.9 L690.8 479.9 L691.4 479.9 L692.0 479.9 L692.6 479.9 L693.2 479.9 L693.8 479.9 L694.4 479.9 L695.0 479.9 L695.6 479.9 L696.2 479.9 L696.8 479.9 L697.4 479.9 L698.0 479.9 L698.6 480.0 L699.2 480.0 L699.8 480.0 L700.4 480.0 L701.0 480.0 L701.6 480.0 L702.2 480.0 L702.8 480.0 L703.4 480.0 L704.0 480.0 L704.6 480.0 L705.2 480.0 L705.8 480.0 L706.4 480.0 L707.0 480.0 L707.6 480.0 L708.2 480.0 L708.8 480.0 L709.4 480.0 L710.0 480.0 L710.6 480.0 L711.2 480.0 L711.8 480.0 L712.4 480.0 L713.0 480.0 L713.6 480.0 L714.2 480.0 L714.8 480.0 L715.4 480.0 L716.0 480.0 L716.6 480.0 L717.2 480.0 L717.8 479.9 L718.4 479.9 L719.0 479.9 L719.6 479.9 L720.2 479.9 L720.8 479.9 L721.4 479.9 L722.0 479.9 L722.6 479.9 L723.2 479.9 L723.8 479.9 L724.4 479.9 L725.0 479.9 L725.6 479.8 L726.2 479.8 L726.8 479.8 L727.4 479.8 L728.0 479.8 L728.6 479.8 L729.2 479.8 L729.8 479.7 L730.4 479.7 L731.0 479.7 L731.6 479.7 L732.2 479.6 L732.8 479.6 L733.4 479.6 L734.0 479.5 L734.6 479.5 L735.2 479.4 L735.8 479.4 L736.4 479.3 L737.0 479.3 L737.6 479.2 L738.2 479.1 L738.8 478.9 L739.4 478.8 L740.0 478.6 L740.6 478.4 L741.2 478.1 L741.8 477.8 L742.4 477.4 L743.0 476.9 L743.6 476.3 L744.2 475.6 L744.8 474.8 L745.4 473.8 L746.0 472.6 L746.6 471.2 L747.2 469.6 L747.8 467.6 L748.4 465.4 L749.0 462.7 L749.6 459.7 L750.2 456.2 L750.8 452.2 L751.4 447.7 L752.0 442.6 L752.6 436.9 L753.2 430.5 L753.8 423.4 L754.4 415.6 L755.0 407.0 L755.6 397.7 L756.2 387.6 L756.8 376.9 L757.4 365.4 L758.0 353.2 L758.6 340.5 L759.2 327.2 L759.8 313.5 L760.4 299.5 L761.0 285.3 L761.6 271.0 L762.2 256.8 L762.8 242.8 L763.4 229.2 L764.0 216.2 L764.6 203.9 L765.2 192.6 L765.8 182.3 L766.4 173.2 L767.0 165.5 L767.6 159.4 L768.2 154.8 L768.8 151.9 L769.4 150.7 L770.0 151.3 L770.6 153.7 L771.2 157.7 L771.8 163.4 L772.4 170.6 L773.0 179.2 L773.6 189.1 L774.2 200.1 L774.8 212.1 L775.4 224.9 L776.0 238.3 L776.6 252.2 L777.2 266.4 L777.8 280.7 L778.4 294.9 L779.0 309.0 L779.6 322.8 L780.2 336.3 L780.8 349.2 L781.4 361.5 L782.0 373.2 L782.6 384.2 L783.2 394.5 L783.8 404.0 L784.4 412.8 L785.0 420.8 L785.6 428.1 L786.2 434.6 L786.8 440.5 L787.4 445.7 L788.0 450.3 L788.6 454.4 L789.2 457.9 L789.8 460.9 L790.4 463.5 L791.0 465.8 L791.6 467.6 L792.2 469.2 L792.8 470.5 L793.4 471.5 L794.0 472.4 L794.6 473.1 L795.2 473.7 L795.8 474.2 L796.4 474.7 L797.0 475.0 L797.6 475.4 L798.2 475.6 L798.8 475.9 L799.4 476.1 L800.0 476.4 L800.6 476.6 L801.2 476.8 L801.8 477.0 L802.4 477.2 L803.0 477.4 L803.6 477.6 L804.2 477.8 L804.8 477.9 L805.4 478.1 L806.0 478.2 L806.6 478.4 L807.2 478.5 L807.8 478.7 L808.4 478.8 L809.0 478.9 L809.6 479.1 L810.2 479.2 L810.8 479.3 L811.4 479.4 L812.0 479.5 L812.6 479.6 L813.2 479.7 L813.8 479.8 L814.4 479.9 L815.0 480.0 L815.6 480.0 L816.2 480.1 L816.8 480.2 L817.4 480.3 L818.0 480.3 L818.6 480.4 L819.2 480.5" stroke="#2ca02c" stroke-width="1.92"/>
<path d="M406.4 493.6 L407.0 494.5 L407.6 494.5 L408.2 494.3 L408.8 494.5 L409.4 495.0 L410.0 495.3 L410.6 494.8 L411.2 494.1 L411.8 495.6 L412.4 494.7 L413.0 495.4 L413.6 495.1 L414.2 495.4 L414.8 494.8 L415.4 496.0 L416.0 495.0 L416.6 495.4 L417.2 495.7 L417.8 496.6 L418.4 495.7 L419.0 495.0 L419.6 494.6 L420.2 495.6 L420.8 495.0 L421.4 495.3 L422.0 495.5 L422.6 494.5 L423.2 495.8 L423.8 495.4 L424.4 494.1 L425.0 494.0 L425.6 493.3 L426.2 493.4 L426.8 494.1 L427.4 495.1 L428.0 494.2 L428.6 494.0 L429.2 495.9 L429.8 495.1 L430.4 495.6 L431.0 495.7 L431.6 493.9 L432.2 494.4 L432.8 495.6 L433.4 494.7 L434.0 494.4 L434.6 494.4 L435.2 493.8 L435.8 493.9 L436.4 493.7 L437.0 493.5 L437.6 495.3 L438.2 495.2 L438.8 495.3 L439.4 494.8 L440.0 495.5 L440.6 495.0 L441.2 494.2 L441.8 493.9 L442.4 493.7 L443.0 495.2 L443.6 494.7 L444.2 494.1 L444.8 495.7 L445.4 495.4 L446.0 495.2 L446.6 494.6 L447.2 494.8 L447.8 495.8 L448.4 495.9 L449.0 495.8 L449.6 494.9 L450.2 495.7 L450.8 495.8 L451.4 495.5 L452.0 495.2 L452.6 494.9 L453.2 495.3 L453.8 495.0 L454.4 495.0 L455.0 494.0 L455.6 494.4 L456.2 495.0 L456.8 494.5 L457.4 495.0 L458.0 493.9 L458.6 494.6 L459.2 494.1 L459.8 494.9 L460.4 494.0 L461.0 494.8 L461.6 494.9 L462.2 494.3 L462.8 494.6 L463.4 494.1 L464.0 492.8 L464.6 494.4 L465.2 495.0 L465.8 494.8 L466.4 494.5 L467.0 494.8 L467.6 494.7 L468.2 494.4 L468.8 494.2 L469.4 494.9 L470.0 494.2 L470.6 493.8 L471.2 494.3 L471.8 493.8 L472.4 494.4 L473.0 493.3 L473.6 493.6 L474.2 493.9 L474.8 494.5 L475.4 494.2 L476.0 495.3 L476.6 494.9 L477.2 494.5 L477.8 495.6 L478.4 494.0 L479.0 495.7 L479.6 494.5 L480.2 495.1 L480.8 494.5 L481.4 494.8 L482.0 495.7 L482.6 494.3 L483.2 493.9 L483.8 495.0 L484.4 495.1 L485.0 494.3 L485.6 494.3 L486.2 493.1 L486.8 493.9 L487.4 493.7 L488.0 494.3 L488.6 494.7 L489.2 496.9 L489.8 495.7 L490.4 496.6 L491.0 494.9 L491.6 494.8 L492.2 495.0 L492.8 494.7 L493.4 494.1 L494.0 493.6 L494.6 493.3 L495.2 493.1 L495.8 494.1 L496.4 492.8 L497.0 490.8 L497.6 494.0 L498.2 495.8 L498.8 496.1 L499.4 496.7 L500.0 499.3 L500.6 497.8 L501.2 496.7 L501.8 496.8 L502.4 493.5 L503.0 493.8 L503.6 493.2 L504.2 492.6 L504.8 491.1 L505.4 492.3 L506.0 492.1 L506.6 493.5 L507.2 494.0 L507.8 493.1 L508.4 495.4 L509.0 495.5 L509.6 496.1 L510.2 496.3 L510.8 496.3 L511.4 495.5 L512.0 495.5 L512.6 495.2 L513.2 495.0 L513.8 494.2 L514.4 494.6 L515.0 494.5 L515.6 494.9 L516.2 495.1 L516.8 493.7 L517.4 493.6 L518.0 493.6 L518.6 493.4 L519.2 493.3 L519.8 493.4 L520.4 493.2 L521.0 493.8 L521.6 493.2 L522.2 495.2 L522.8 493.9 L523.4 494.0 L524.0 493.7 L524.6 493.5 L525.2 493.9 L525.8 494.8 L526.4 494.9 L527.0 493.6 L527.6 495.0 L528.2 494.5 L528.8 494.3 L529.4 495.4 L530.0 495.8 L530.6 494.8 L531.2 495.0 L531.8 494.9 L532.4 495.0 L533.0 495.6 L533.6 496.1 L534.2 495.3 L534.8 495.3 L535.4 495.8 L536.0 494.4 L536.6 494.5 L537.2 494.0 L537.8 494.6 L538.4 494.3 L539.0 494.7 L539.6 494.7 L540.2 494.4 L540.8 494.8 L541.4 494.4 L542.0 494.3 L542.6 493.7 L543.2 495.3 L543.8 494.3 L544.4 494.7 L545.0 494.6 L545.6 495.2 L546.2 494.6 L546.8 493.8 L547.4 494.0 L548.0 493.6 L548.6 494.0 L549.2 493.4 L549.8 493.8 L550.4 495.3 L551.0 494.6 L551.6 495.6 L552.2 496.7 L552.8 495.2 L553.4 494.6 L554.0 495.3 L554.6 496.0 L555.2 496.0 L555.8 495.0 L556.4 495.1 L557.0 495.4 L557.6 495.3 L558.2 495.5 L558.8 495.4 L559.4 495.6 L560.0 495.4 L560.6 496.3 L561.2 495.1 L561.8 495.7 L562.4 494.5 L563.0 495.4 L563.6 494.7 L564.2 494.8 L564.8 495.0 L565.4 493.6 L566.0 493.4 L566.6 494.6 L567.2 493.8 L567.8 494.1 L568.4 495.5 L569.0 494.4 L569.6 494.3 L570.2 494.6 L570.8 495.0 L571.4 494.6 L572.0 494.6 L572.6 494.2 L573.2 494.6 L573.8 495.3 L574.4 494.2 L575.0 494.8 L575.6 494.6 L576.2 495.5 L576.8 493.8 L577.4 494.1 L578.0 493.7 L578.6 494.0 L579.2 494.8 L579.8 494.8 L580.4 494.7 L581.0 494.6 L581.6 494.6 L582.2 494.3 L582.8 494.8 L583.4 495.4 L584.0 495.6 L584.6 495.9 L585.2 494.7 L585.8 494.7 L586.4 494.4 L587.0 494.7 L587.6 494.6 L588.2 494.0 L588.8 493.5 L589.4 494.4 L590.0 494.7 L590.6 495.1 L591.2 494.5 L591.8 495.9 L592.4 495.7 L593.0 495.9 L593.6 494.9 L594.2 495.7 L594.8 494.7 L595.4 494.5 L596.0 494.8 L596.6 495.1 L597.2 494.7 L597.8 494.9 L598.4 495.4 L599.0 494.6 L599.6 494.0 L600.2 495.4 L600.8 494.9 L601.4 495.3 L602.0 494.6 L602.6 495.0 L603.2 494.6 L603.8 493.5 L604.4 494.4 L605.0 493.1 L605.6 492.8 L606.2 493.3 L606.8 493.6 L607.4 493.3 L608.0 494.2 L608.6 494.6 L609.2 495.2 L609.8 494.7 L610.4 494.1 L611.0 494.6 L611.6 495.4 L612.2 495.5 L612.8 495.3 L613.4 494.8 L614.0 494.9 L614.6 494.6 L615.2 494.3 L615.8 494.5 L616.4 494.3 L617.0 494.2 L617.6 494.4 L618.2 494.3 L618.8 493.5 L619.4 494.2 L620.0 494.6 L620.6 495.5 L621.2 494.6 L621.8 495.8 L622.4 495.5 L623.0 494.4 L623.6 494.6 L624.2 495.3 L624.8 496.1 L625.4 495.7 L626.0 495.9 L626.6 494.9 L627.2 494.2 L627.8 495.3 L628.4 495.5 L629.0 495.3 L629.6 494.3 L630.2 494.4 L630.8 494.9 L631.4 493.9 L632.0 494.1 L632.6 492.8 L633.2 493.1 L633.8 493.0 L634.4 493.9 L635.0 493.8 L635.6 494.5 L636.2 495.0 L636.8 495.1 L637.4 495.6 L638.0 495.4 L638.6 494.3 L639.2 494.6 L639.8 494.4 L640.4 493.8 L641.0 495.0 L641.6 494.6 L642.2 494.7 L642.8 494.7 L643.4 495.2 L644.0 494.4 L644.6 494.9 L645.2 495.9 L645.8 495.8 L646.4 494.8 L647.0 494.6 L647.6 495.7 L648.2 494.2 L648.8 494.9 L649.4 494.6 L650.0 495.1 L650.6 495.4 L651.2 496.0 L651.8 494.0 L652.4 495.4 L653.0 494.3 L653.6 495.3 L654.2 495.1 L654.8 495.7 L655.4 495.3 L656.0 494.7 L656.6 495.9 L657.2 494.7 L657.8 495.0 L658.4 495.6 L659.0 495.1 L659.6 494.9 L660.2 494.5 L660.8 494.4 L661.4 494.2 L662.0 493.8 L662.6 494.3 L663.2 494.6 L663.8 493.7 L664.4 493.7 L665.0 495.0 L665.6 494.6 L666.2 495.2 L666.8 495.6 L667.4 494.8 L668.0 495.7 L668.6 494.3 L669.2 495.3 L669.8 494.6 L670.4 494.9 L671.0 495.0 L671.6 494.1 L672.2 494.5 L672.8 494.2 L673.4 494.4 L674.0 494.9 L674.6 494.6 L675.2 494.6 L675.8 494.4 L676.4 495.5 L677.0 495.0 L677.6 496.1 L678.2 495.1 L678.8 495.6 L679.4 495.6 L680.0 494.6 L680.6 493.9 L681.2 495.5 L681.8 495.3 L682.4 494.7 L683.0 494.8 L683.6 494.1 L684.2 494.4 L684.8 494.0 L685.4 493.2 L686.0 494.2 L686.6 493.7 L687.2 494.6 L687.8 495.0 L688.4 495.3 L689.0 493.8 L689.6 495.1 L690.2 494.3 L690.8 494.3 L691.4 494.3 L692.0 494.1 L692.6 493.1 L693.2 494.5 L693.8 495.0 L694.4 495.1 L695.0 495.4 L695.6 494.6 L696.2 494.7 L696.8 495.6 L697.4 495.9 L698.0 495.2 L698.6 493.8 L699.2 495.9 L699.8 494.3 L700.4 495.1 L701.0 494.2 L701.6 495.3 L702.2 494.6 L702.8 495.6 L703.4 495.4 L704.0 494.0 L704.6 494.2 L705.2 495.0 L705.8 495.0 L706.4 495.7 L707.0 494.4 L707.6 494.2 L708.2 494.0 L708.8 494.1 L709.4 494.6 L710.0 494.0 L710.6 493.8 L711.2 493.4 L711.8 492.9 L712.4 494.3 L713.0 494.6 L713.6 494.2 L714.2 494.5 L714.8 494.5 L715.4 494.3 L716.0 494.6 L716.6 493.4 L717.2 493.7 L717.8 493.8 L718.4 494.4 L719.0 495.1 L719.6 495.0 L720.2 495.0 L720.8 495.2 L721.4 494.7 L722.0 494.3 L722.6 494.6 L723.2 493.7 L723.8 494.7 L724.4 494.2 L725.0 494.2 L725.6 495.3 L726.2 494.5 L726.8 494.4 L727.4 494.8 L728.0 494.8 L728.6 495.0 L729.2 495.3 L729.8 494.7 L730.4 494.8 L731.0 494.7 L731.6 495.3 L732.2 494.4 L732.8 494.4 L733.4 494.5 L734.0 494.7 L734.6 494.7 L735.2 496.1 L735.8 494.7 L736.4 494.7 L737.0 494.5 L737.6 494.5 L738.2 495.4 L738.8 494.4 L739.4 493.5 L740.0 493.6 L740.6 494.1 L741.2 495.4 L741.8 494.1 L742.4 493.0 L743.0 493.2 L743.6 493.7 L744.2 494.7 L744.8 493.3 L745.4 493.3 L746.0 495.3 L746.6 494.0 L747.2 495.3 L747.8 495.3 L748.4 494.9 L749.0 493.3 L749.6 494.9 L750.2 494.5 L750.8 493.3 L751.4 493.6 L752.0 495.5 L752.6 496.0 L753.2 496.9 L753.8 496.5 L754.4 495.1 L755.0 495.2 L755.6 494.9 L756.2 493.6 L756.8 494.5 L757.4 494.6 L758.0 493.9 L758.6 493.7 L759.2 493.0 L759.8 494.1 L760.4 494.8 L761.0 495.6 L761.6 497.9 L762.2 499.7 L762.8 497.7 L763.4 498.0 L764.0 497.2 L764.6 500.3 L765.2 498.7 L765.8 498.8 L766.4 498.4 L767.0 498.5 L767.6 494.1 L768.2 490.5 L768.8 489.0 L769.4 489.9 L770.0 491.1 L770.6 492.6 L771.2 498.4 L771.8 494.5 L772.4 491.8 L773.0 493.1 L773.6 492.4 L774.2 495.0 L774.8 495.9 L775.4 495.9 L776.0 495.1 L776.6 496.7 L777.2 494.5 L777.8 493.0 L778.4 490.4 L779.0 493.2 L779.6 491.9 L780.2 491.8 L780.8 490.3 L781.4 491.6 L782.0 489.2 L782.6 490.4 L783.2 488.2 L783.8 489.6 L784.4 490.1 L785.0 491.4 L785.6 495.0 L786.2 495.9 L786.8 495.7 L787.4 497.8 L788.0 499.2 L788.6 497.4 L789.2 497.7 L789.8 496.9 L790.4 496.9 L791.0 495.0 L791.6 495.2 L792.2 493.7 L792.8 494.6 L793.4 495.1 L794.0 494.6 L794.6 495.5 L795.2 494.8 L795.8 494.4 L796.4 495.2 L797.0 494.6 L797.6 494.7 L798.2 494.1 L798.8 494.9 L799.4 494.4 L800.0 493.3 L800.6 492.4 L801.2 492.7 L801.8 493.4 L802.4 493.0 L803.0 491.9 L803.6 492.9 L804.2 493.7 L804.8 493.0 L805.4 492.7 L806.0 493.5 L806.6 494.1 L807.2 494.2 L807.8 493.3 L808.4 494.0 L809.0 493.9 L809.6 493.5 L810.2 493.1 L810.8 493.4 L811.4 492.9 L812.0 493.4 L812.6 492.6 L813.2 492.1 L813.8 490.4 L814.4 490.7 L815.0 490.4 L815.6 490.4 L816.2 490.1 L816.8 490.2 L817.4 492.4 L818.0 492.0 L818.6 491.4 L819.2 490.3" stroke="#d62728" stroke-width="1.92"/>
<line x1="406.4" x2="406.4" y1="141.5" y2="522.5" stroke="#008000" stroke-width="1.28" stroke-dasharray="4.73 2.04"/>
<line x1="819.4" x2="819.4" y1="141.5" y2="522.5" stroke="#008000" stroke-width="1.28" stroke-dasharray="4.73 2.04"/>
<line x1="425.5" x2="425.5" y1="141.5" y2="522.5" stroke="#ff0000" stroke-width="1.28" stroke-dasharray="4.73 2.04"/>
<line x1="436.5" x2="436.5" y1="141.5" y2="522.5" stroke="#ff0000" stroke-width="1.28" stroke-dasharray="4.73 2.04"/>
<line x1="431.3" x2="431.3" y1="468.3" y2="495.2" stroke="#ff0000" stroke-width="1.28"/>
<line x1="494.6" x2="494.6" y1="456.6" y2="495.2" stroke="#808080" stroke-width="1.28"/>
<line x1="767.8" x2="767.8" y1="460.3" y2="495.2" stroke="#808080" stroke-width="1.28"/>
</g>
<rect x="376.5" y="141.5" width="480.0" height="381.0" fill="none" stroke="#000" stroke-width="1.02"/>
<line x1="441.5" x2="441.5" y1="522.5" y2="527.0" stroke="#000" stroke-width="1.02"/><text x="441.5" y="541" text-anchor="middle">2500</text><line x1="516.5" x2="516.5" y1="522.5" y2="527.0" stroke="#000" stroke-width="1.02"/><text x="516.5" y="541" text-anchor="middle">3000</text><line x1="592.5" x2="592.5" y1="522.5" y2="527.0" stroke="#000" stroke-width="1.02"/><text x="592.5" y="541" text-anchor="middle">3500</text><line x1="667.5" x2="667.5" y1="522.5" y2="527.0" stroke="#000" stroke-width="1.02"/><text x="667.5" y="541" text-anchor="middle">4000</text><line x1="743.5" x2="743.5" y1="522.5" y2="527.0" stroke="#000" stroke-width="1.02"/><text x="743.5" y="541" text-anchor="middle">4500</text><line x1="819.5" x2="819.5" y1="522.5" y2="527.0" stroke="#000" stroke-width="1.02"/><text x="819.5" y="541" text-anchor="middle">5000</text>
<line x1="372.0" x2="376.5" y1="495.5" y2="495.5" stroke="#000" stroke-width="1.02"/><text x="367.1" y="500.1" text-anchor="end">0.0</text><line x1="372.0" x2="376.5" y1="440.5" y2="440.5" stroke="#000" stroke-width="1.02"/><text x="367.1" y="445.1" text-anchor="end">0.2</text><line x1="372.0" x2="376.5" y1="385.5" y2="385.5" stroke="#000" stroke-width="1.02"/><text x="367.1" y="390.1" text-anchor="end">0.4</text><line x1="372.0" x2="376.5" y1="330.5" y2="330.5" stroke="#000" stroke-width="1.02"/><text x="367.1" y="335.1" text-anchor="end">0.6</text><line x1="372.0" x2="376.5" y1="274.5" y2="274.5" stroke="#000" stroke-width="1.02"/><text x="367.1" y="279.1" text-anchor="end">0.8</text><line x1="372.0" x2="376.5" y1="219.5" y2="219.5" stroke="#000" stroke-width="1.02"/><text x="367.1" y="224.1" text-anchor="end">1.0</text><line x1="372.0" x2="376.5" y1="164.5" y2="164.5" stroke="#000" stroke-width="1.02"/><text x="367.1" y="169.1" text-anchor="end">1.2</text>
<text x="616" y="132.6" text-anchor="middle" font-size="15.33">GEM63437_focussed_2</text>
<text x="616" y="562" text-anchor="middle">Time-of-flight (<tspan font-style="italic">μs</tspan>)</text>
<text transform="translate(334.0 331.3) rotate(-90)" text-anchor="middle">(microsecond)<tspan font-size="8.96" dy="-4.9">−1</tspan></text>
<rect x="442.6" y="148.5" width="309.8" height="61.5" rx="2.6" fill="#fff" fill-opacity="0.8" stroke="#ccc" stroke-width="1.1"/>
<line x1="446" x2="474" y1="158.9" y2="158.9" stroke="#1f77b4" stroke-width="1.92"/>
<line x1="446" x2="474" y1="178.4" y2="178.4" stroke="#2ca02c" stroke-width="1.92"/>
<line x1="446" x2="474" y1="198" y2="198" stroke="#d62728" stroke-width="1.92"/>
<text x="483.4" y="163.6" font-size="12.98">GEM63437_focussed_2: spec 3</text>
<text x="483.4" y="182.8" font-size="12.98">GEM63437_focussed_2_Workspace: Calc</text>
<text x="483.4" y="201.8" font-size="12.98">GEM63437_focussed_2_Workspace: Diff</text>
</g>
</svg>
</body></html>
